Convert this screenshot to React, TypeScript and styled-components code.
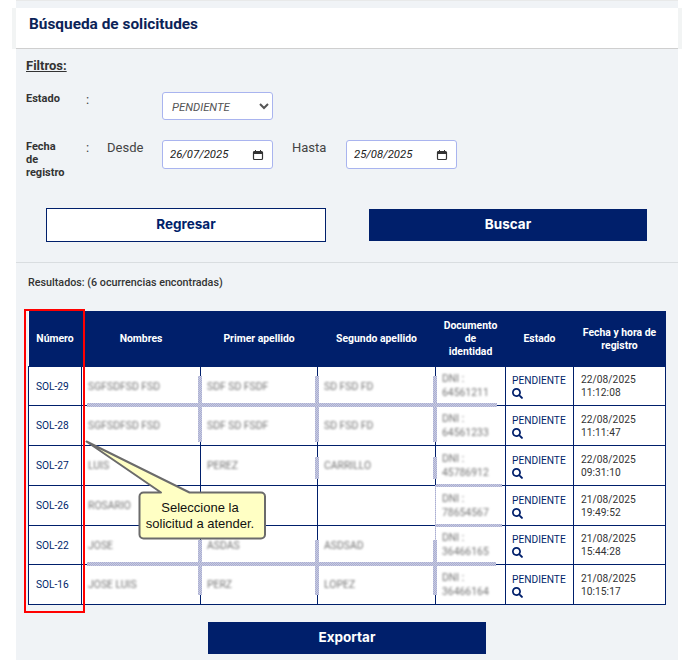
import React from "react";
import styled, { createGlobalStyle } from "styled-components";
import { FaSearch } from "react-icons/fa";

const NAVY = "#001f6b";

const Global = createGlobalStyle`
  html, body { margin: 0; padding: 0; background: #fff; }
  body { font-family: Roboto, "Liberation Sans", sans-serif; overflow: hidden; }
`;

const Page = styled.div`
  width: 662px;
  height: 660px;
  margin-left: 16px;
  background: #f0f3f6;
  padding-top: 8px;
  box-sizing: border-box;
  position: relative;
  box-shadow: inset 0 1px 0 #e8e9e9;
`;

const Header = styled.header`
  height: 41px;
  box-sizing: border-box;
  background: #fff;
  border-bottom: 1px solid #cfcfcf;
  padding: 7px 13px 0;
  box-shadow: -4px 0 0 #f2f4f4, 4px 0 0 #f2f4f4;
`;

const Title = styled.h1`
  margin: 0;
  font-size: 15.4px;
  line-height: 19px;
  font-weight: 700;
  color: #0b2358;
`;

const Filters = styled.section`
  padding: 8px 0 0 10px;
`;

const FiltersTitle = styled.div`
  font-size: 13px;
  line-height: 17px;
  font-weight: 700;
  color: #333;
  text-decoration: underline;
`;

const FilterRow = styled.div<{ $top: number }>`
  display: grid;
  grid-template-columns: 60px 21px 55px 111px 19px 54px 111px;
  align-items: start;
  margin-top: ${(p) => p.$top}px;
`;

const FieldLabel = styled.div`
  font-size: 11px;
  line-height: 13px;
  font-weight: 700;
  color: #333;
`;

const Colon = styled.div`
  font-size: 13px;
  line-height: 15px;
  color: #444;
`;

const RangeLabel = styled.div`
  font-size: 13px;
  line-height: 15px;
  color: #444;
`;

const Gap = styled.div``;

const Select = styled.select`
  grid-column: 4;
  width: 111px;
  height: 28px;
  box-sizing: border-box;
  border: 1px solid #a9b4ef;
  border-radius: 3px;
  background-color: #fff;
  padding: 4px 5px 2px;
  font-family: Roboto, sans-serif;
  font-size: 11.3px;
  font-style: italic;
  color: #555;
  margin: 0;
`;

const DateField = styled.div`
  width: 111px;
  height: 29px;
  box-sizing: border-box;
  border: 1px solid #a9b4ef;
  border-radius: 3px;
  background: #fff;
  display: flex;
  align-items: center;
  padding: 0 8px 0 7px;
`;

const DateText = styled.input`
  flex: 1;
  min-width: 0;
  border: none;
  outline: none;
  background: transparent;
  padding: 0;
  margin: 0;
  font-family: Roboto, sans-serif;
  font-size: 11.3px;
  font-style: italic;
  color: #222;
`;

const CalendarIcon = styled.svg`
  width: 12px;
  height: 12px;
  flex: none;
  color: #333;
`;

const Actions = styled.div`
  display: flex;
  padding: 0 31px 0 30px;
  justify-content: space-between;
  align-items: center;
  margin-top: 29px;
  height: 34px;
`;

const Button = styled.button<{ $outline?: boolean }>`
  width: ${(p) => (p.$outline ? 280 : 278)}px;
  height: ${(p) => (p.$outline ? 34 : 32)}px;
  box-sizing: border-box;
  border: ${(p) => (p.$outline ? `1px solid ${NAVY}` : "none")};
  background: ${(p) => (p.$outline ? "#fff" : NAVY)};
  color: ${(p) => (p.$outline ? NAVY : "#fff")};
  font-family: Inter, sans-serif;
  font-size: 13.5px;
  font-weight: 700;
  padding: 0 0 2px;
  display: block;
`;

const Divider = styled.hr`
  border: none;
  border-top: 1px solid #d9dde0;
  margin: 20px 0 0;
`;

const Results = styled.div`
  font-size: 10.75px;
  line-height: 13px;
  font-weight: 500;
  color: #333;
  margin: 13px 0 0 12px;
`;

const TableWrap = styled.div`
  position: relative;
  width: 637px;
  margin: 22px 0 0 12px;
`;

const Table = styled.table`
  width: 637px;
  table-layout: fixed;
  border-collapse: collapse;
  background: #fff;
`;

const Th = styled.th<{ $stacked?: boolean }>`
  height: 55px;
  background: ${NAVY};
  color: #fff;
  font-size: 10.4px;
  line-height: 13px;
  font-weight: 700;
  padding: 0 ${(p) => (p.$stacked ? 7 : 6)}px;
  text-align: center;
  vertical-align: middle;
`;

const Row = styled.tr<{ $short?: boolean }>`
  height: ${(p) => (p.$short ? 39 : 40)}px;
`;

const Td = styled.td`
  border: 1px solid ${NAVY};
  padding: 0 6px;
  font-size: 10.2px;
  line-height: 13px;
  color: ${NAVY};
  vertical-align: middle;
`;

const DateCell = styled(Td)`
  color: #333;
  letter-spacing: 0.05px;
  padding-left: 7px;
`;

const StateCell = styled(Td)`
  padding-left: 6px;
  padding-top: 1px;
`;

const NumberCell = styled(Td)`
  padding-left: 7px;
`;

const Redacted = styled.span`
  display: block;
  filter: blur(1.3px);
  color: #747474;
  font-size: 10.4px;
  line-height: 13px;
`;

const RedactedDoc = styled(Redacted)`
  line-height: 14px;
`;

const SearchGlyph = styled(FaSearch)`
  display: block;
  width: 11px;
  height: 11px;
  color: ${NAVY};
  margin-top: 1px;
`;

const Smudge = styled.div<{ $x: number; $y: number; $w: number; $h: number }>`
  position: absolute;
  left: ${(p) => p.$x}px;
  top: ${(p) => p.$y}px;
  width: ${(p) => p.$w}px;
  height: ${(p) => p.$h}px;
  background: repeating-conic-gradient(#a9aed3 0 25%, #c9cbe0 0 50%) 0 0 / 2px 2px;
`;

const RedBox = styled.div`
  position: absolute;
  left: -4px;
  top: -2px;
  width: 61px;
  height: 304px;
  box-sizing: border-box;
  border: 2px solid #f00;
  pointer-events: none;
`;

const CalloutShape = styled.svg`
  position: absolute;
  left: 52px;
  top: 124px;
  width: 200px;
  height: 110px;
`;

const CalloutText = styled.div`
  position: absolute;
  left: 111px;
  top: 181px;
  width: 122px;
  height: 47px;
  display: flex;
  align-items: center;
  justify-content: center;
  text-align: center;
  font-family: "Liberation Sans", Arial, sans-serif;
  font-size: 13px;
  line-height: 16px;
  color: #111;
`;

const Footer = styled.div`
  display: flex;
  justify-content: center;
  margin-top: 17px;
`;

const widths = [53, 119, 117, 118, 70, 68, 92];
const heads = [
  "Número",
  "Nombres",
  "Primer apellido",
  "Segundo apellido",
  "Documento de identidad",
  "Estado",
  "Fecha y hora de registro",
];

const rows = [
  { id: "SOL-29", n: "SGFSDFSD FSD", a: "SDF SD FSDF", b: "SD FSD FD", d: "64561211", f: "22/08/2025", h: "11:12:08", short: true },
  { id: "SOL-28", n: "SGFSDFSD FSD", a: "SDF SD FSDF", b: "SD FSD FD", d: "64561233", f: "22/08/2025", h: "11:11:47" },
  { id: "SOL-27", n: "LUIS", a: "PEREZ", b: "CARRILLO", d: "45786912", f: "22/08/2025", h: "09:31:10" },
  { id: "SOL-26", n: "ROSARIO", a: "", b: "", d: "78654567", f: "21/08/2025", h: "19:49:52" },
  { id: "SOL-22", n: "JOSE", a: "ASDAS", b: "ASDSAD", d: "36466165", f: "21/08/2025", h: "15:44:28", short: true },
  { id: "SOL-16", n: "JOSE LUIS", a: "PERZ", b: "LOPEZ", d: "36466164", f: "21/08/2025", h: "10:15:17" },
];

// Page coordinates of the retouching marks, converted to the table's origin (28, 311).
const marks = [
  [198, 376, 4, 66],
  [315, 376, 4, 66],
  [433, 376, 4, 66],
  [87, 403, 410, 4],
  [315, 457, 4, 22],
  [433, 457, 4, 22],
  [436, 484, 66, 3],
  [436, 524, 66, 3],
  [435, 485, 1, 55],
  [198, 540, 4, 55],
  [315, 540, 4, 55],
  [433, 540, 4, 55],
  [87, 562, 409, 4],
];

function DateBox({ value }: { value: string }) {
  return (
    <DateField>
      <DateText type="text" defaultValue={value} />
      <CalendarIcon viewBox="0 0 12 12" fill="none">
        <path d="M1.5 3.5 a1 1 0 0 1 1-1 h7 a1 1 0 0 1 1 1 v6 a1 1 0 0 1-1 1 h-7 a1 1 0 0 1-1-1 Z" stroke="currentColor" strokeWidth="1.2" />
        <path d="M1.5 3h9v2h-9z" fill="currentColor" />
        <path d="M3.5 1v2M8.5 1v2" stroke="currentColor" strokeWidth="1" />
      </CalendarIcon>
    </DateField>
  );
}

export default function App() {
  return (
    <Page>
      <Global />
      <Header>
        <Title>Búsqueda de solicitudes</Title>
      </Header>
      <Filters>
        <FiltersTitle>Filtros:</FiltersTitle>
        <FilterRow $top={18}>
          <FieldLabel>Estado</FieldLabel>
          <Colon>:</Colon>
          <Gap />
          <Select defaultValue="PENDIENTE">
            <option>PENDIENTE</option>
            <option>ATENDIDO</option>
          </Select>
        </FilterRow>
        <FilterRow $top={20}>
          <FieldLabel>
            Fecha
            <br />
            de
            <br />
            registro
          </FieldLabel>
          <Colon>:</Colon>
          <RangeLabel>Desde</RangeLabel>
          <DateBox value="26/07/2025" />
          <Gap />
          <RangeLabel>Hasta</RangeLabel>
          <DateBox value="25/08/2025" />
        </FilterRow>
      </Filters>
      <Actions>
        <Button $outline>Regresar</Button>
        <Button>Buscar</Button>
      </Actions>
      <Divider />
      <Results>Resultados: (6 ocurrencias encontradas)</Results>
      <TableWrap>
        <Table>
          <colgroup>
            {widths.map((w, i) => (
              <col key={i} width={w} />
            ))}
          </colgroup>
          <thead>
            <tr>
              {heads.map((h) => (
                <Th key={h} $stacked={h.startsWith("Documento")}>
                  {h}
                </Th>
              ))}
            </tr>
          </thead>
          <tbody>
            {rows.map((r) => (
              <Row key={r.id} $short={r.short}>
                <NumberCell>{r.id}</NumberCell>
                <Td>
                  <Redacted>{r.n}</Redacted>
                </Td>
                <Td>
                  <Redacted>{r.a}</Redacted>
                </Td>
                <Td>
                  <Redacted>{r.b}</Redacted>
                </Td>
                <Td>
                  <RedactedDoc>
                    DNI :
                    <br />
                    {r.d}
                  </RedactedDoc>
                </Td>
                <StateCell>
                  PENDIENTE
                  <SearchGlyph />
                </StateCell>
                <DateCell>
                  {r.f}
                  <br />
                  {r.h}
                </DateCell>
              </Row>
            ))}
          </tbody>
        </Table>
        {marks.map(([x, y, w, h], i) => (
          <Smudge key={i} $x={x - 28} $y={y - 311} $w={w} $h={h} />
        ))}
        <RedBox />
        <CalloutShape viewBox="80 435 200 110">
          <path
            d="M143.5 492.5 H161 L86.5 441.5 L189.5 492.5 H261 a4 4 0 0 1 4 4 V534.5 a4 4 0 0 1 -4 4 H143.5 a4 4 0 0 1 -4 -4 V496.5 a4 4 0 0 1 4 -4 Z"
            fill="#ffffc4"
            stroke="#6b6b6b"
            strokeWidth="2"
            strokeLinejoin="round"
          />
        </CalloutShape>
        <CalloutText>
          Seleccione la
          <br />
          solicitud a atender.
        </CalloutText>
      </TableWrap>
      <Footer>
        <Button>Exportar</Button>
      </Footer>
    </Page>
  );
}
